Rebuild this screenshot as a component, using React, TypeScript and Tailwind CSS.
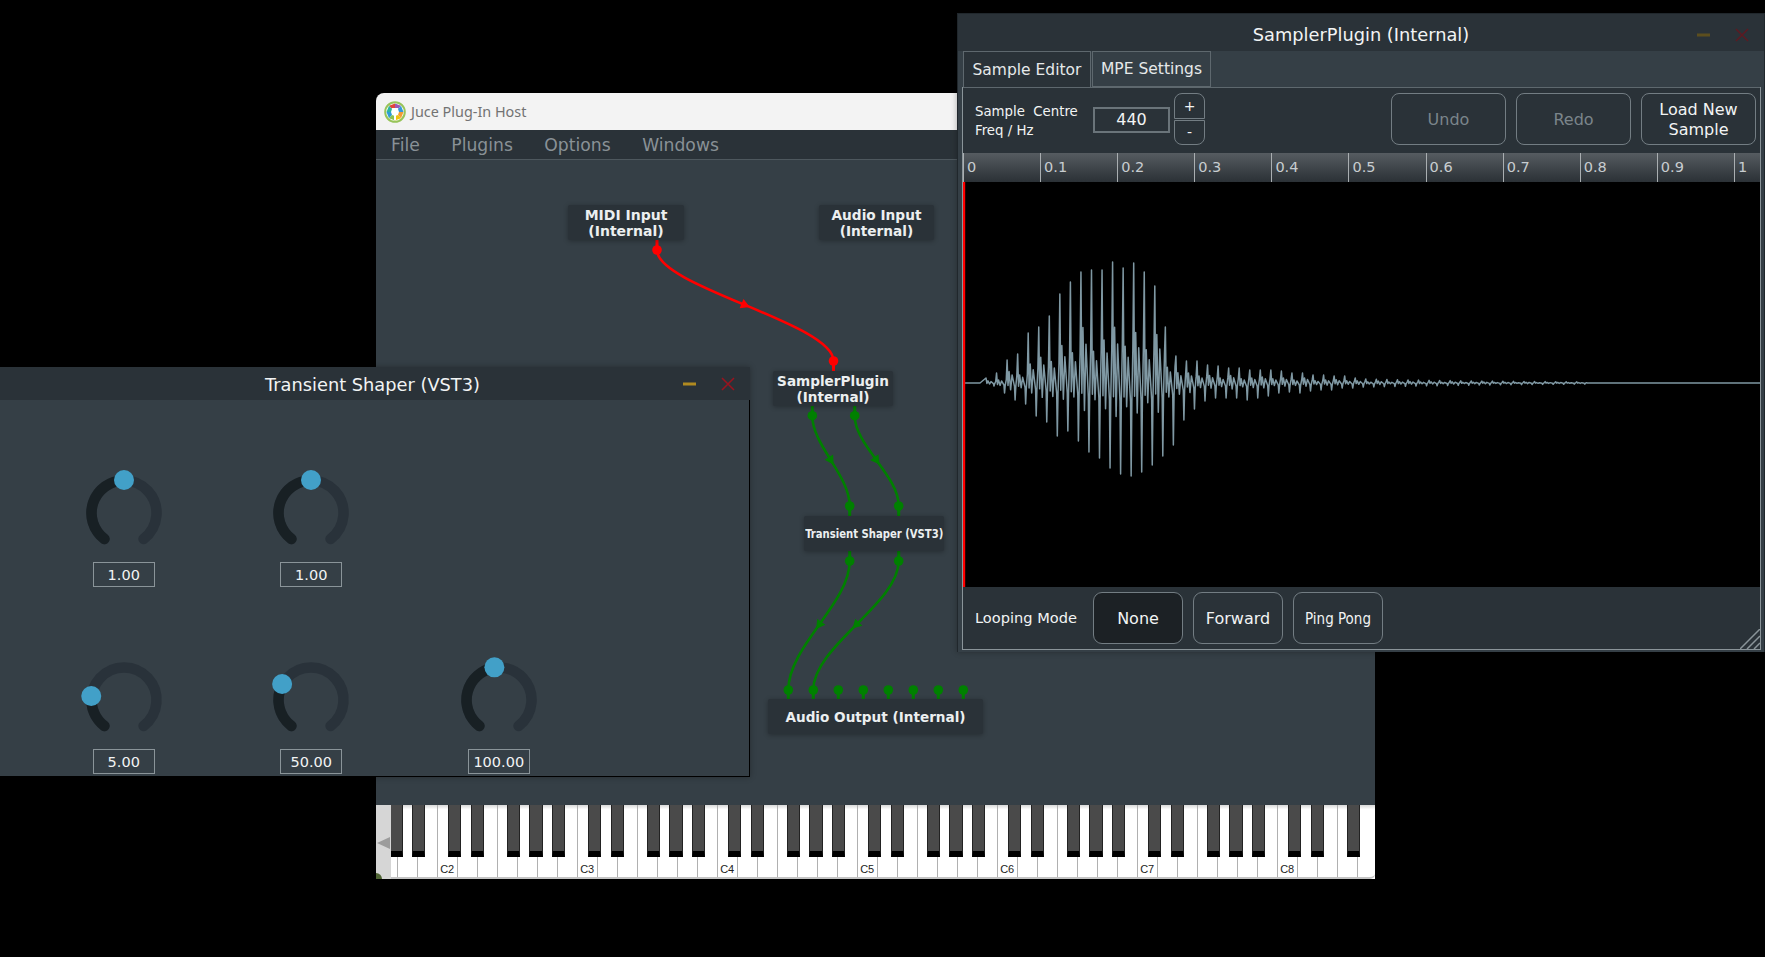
const FONT = "font-['DejaVu_Sans',sans-serif]";

// pin and wire coordinates are relative to the graph panel
const wires = [
  { x1: 281, y1: 90, x2: 457.5, y2: 201, color: "#ff0000" },
  { x1: 436.3, y1: 255.7, x2: 473.7, y2: 346, color: "#008000" },
  { x1: 478.7, y1: 255.7, x2: 522.7, y2: 346, color: "#008000" },
  { x1: 473.7, y1: 401, x2: 412.3, y2: 530, color: "#008000" },
  { x1: 522.7, y1: 401, x2: 437.3, y2: 530, color: "#008000" },
];

const pins = [
  { x: 281, y: 90, stem: 80, color: "#ff0000" },
  { x: 457.5, y: 201, stem: 211, color: "#ff0000" },
  { x: 436.3, y: 255.7, stem: 246, color: "#008000" },
  { x: 478.7, y: 255.7, stem: 246, color: "#008000" },
  { x: 473.7, y: 346, stem: 356, color: "#008000" },
  { x: 522.7, y: 346, stem: 356, color: "#008000" },
  { x: 473.7, y: 401, stem: 391, color: "#008000" },
  { x: 522.7, y: 401, stem: 391, color: "#008000" },
  ...[0, 1, 2, 3, 4, 5, 6, 7].map((i) => ({ x: 412.3 + 25 * i, y: 530, stem: 539, color: "#008000" })),
];

function Graph() {
  return (
    <svg className="absolute inset-0 h-full w-full" fill="none">
      {wires.map((w, i) => {
        const dy = w.y2 - w.y1;
        const c1y = w.y1 + dy * 0.33;
        const c2y = w.y1 + dy * 0.66;
        const mx = (w.x1 + w.x2) / 2;
        const my = 0.125 * w.y1 + 0.375 * c1y + 0.375 * c2y + 0.125 * w.y2;
        const tx = 0.75 * (w.x2 - w.x1);
        const ty = 0.75 * (c2y - c1y) + 0.75 * (w.y2 - w.y1 - (c2y - c1y)) / 2;
        const angle = (Math.atan2(ty, tx) * 180) / Math.PI;
        return (
          <g key={i}>
            <path
              d={`M${w.x1} ${w.y1}C${w.x1} ${c1y} ${w.x2} ${c2y} ${w.x2} ${w.y2}`}
              stroke={w.color}
              strokeWidth="2.6"
            />
            <path
              d="M-4 5L-4 -5L5 0Z"
              fill={w.color}
              transform={`translate(${mx} ${my}) rotate(${angle})`}
            />
          </g>
        );
      })}
      {pins.map((p, i) => (
        <g key={i}>
          <path d={`M${p.x} ${p.y}V${p.stem}`} stroke={p.color} strokeWidth="3" />
          <circle cx={p.x} cy={p.y} r="4.8" fill={p.color} />
        </g>
      ))}
    </svg>
  );
}

function Node({ className, children }: { className: string; children: React.ReactNode }) {
  return (
    <div
      className={`absolute flex items-center justify-center rounded-[2px] bg-[#2a3238] pt-[1px] text-center leading-[16px] font-bold whitespace-nowrap text-[#eceff0] shadow-[0_1px_5px_rgba(0,0,0,0.3)] ${className}`}
    >
      {children}
    </div>
  );
}

const whiteKeys = Array.from({ length: 49 }, (_, i) => i);
const blackOffsets = [11.3, 34.3, 70, 92.6, 115.3];

function Keyboard() {
  const blacks: number[] = [];
  for (let oct = -1; oct <= 6; oct++) {
    for (const off of blackOffsets) {
      const left = 60.7 + oct * 140 + off - 15;
      if (left > -3 && left < 971) blacks.push(left);
    }
  }
  const labelAt: Record<number, string> = { 2: "C2", 9: "C3", 16: "C4", 23: "C5", 30: "C6", 37: "C7", 44: "C8" };
  return (
    <div className="flex h-[74px] shrink-0 bg-white">
      <div className="relative flex w-[15px] shrink-0 items-center bg-[#d6d6d6]">
        <svg width="15" height="14" viewBox="0 0 15 14" className="mt-[1px]">
          <path d="M1 7L14 1V13Z" fill="#9c9c9c" />
        </svg>
        <div className="absolute bottom-0 left-0 h-[6px] w-[6px] rounded-tr-[6px] bg-[#4f6434]" />
      </div>
      <div className="relative flex-1 overflow-hidden rounded-br-[5px] border-b-2 border-[#c4c4c4] bg-gradient-to-b from-[#d8d8d8] from-0% to-white to-[6%]">
        <div className="flex h-full pl-[5.7px]">
          {whiteKeys.map((i) => (
            <div
              key={i}
              className="flex h-full w-5 shrink-0 items-end justify-center border-l border-[#b0b0b0] pb-[1px] font-['Liberation_Sans',sans-serif] text-[11px] leading-[14px] text-[#222]"
            >
              {labelAt[i]}
            </div>
          ))}
        </div>
        {blacks.map((left) => (
          <div
            key={left}
            className="absolute top-0 h-[52px] w-[13.3px] border-x border-b-[6px] border-[#000] border-x-[#222] bg-[#4a4a4a]"
            style={{ left }}
          />
        ))}
      </div>
    </div>
  );
}

function polar(cx: number, cy: number, r: number, deg: number) {
  const a = (deg * Math.PI) / 180;
  return { x: cx + r * Math.sin(a), y: cy - r * Math.cos(a) };
}

function arc(r: number, from: number, to: number) {
  const a = polar(40, 40, r, from);
  const b = polar(40, 40, r, to);
  const large = to - from > 180 ? 1 : 0;
  return `M${a.x} ${a.y}A${r} ${r} 0 ${large} 1 ${b.x} ${b.y}`;
}

function Knob({ angle, value }: { angle: number; value: string }) {
  const thumb = polar(40, 40, 33, angle);
  return (
    <div className="flex flex-col items-center">
      <svg width="80" height="80" viewBox="0 0 80 80" fill="none" className="overflow-visible">
        <path d={arc(32.5, -143, 143)} stroke="#29323a" strokeWidth="10.5" strokeLinecap="round" />
        <path d={arc(32.5, -143, angle)} stroke="#182024" strokeWidth="10.5" strokeLinecap="round" />
        <circle cx={thumb.x} cy={thumb.y} r="10" fill="#42a0c8" />
      </svg>
      <div className="mt-[9px] flex h-[25px] w-[62px] items-center justify-center border border-[#8a9499] pt-[2px] text-[14.5px] text-[#f2f4f4]">
        {value}
      </div>
    </div>
  );
}

function TitleBar({ title, className, iconTop, minus, close }: { title: string; className: string; iconTop: string; minus: string; close: string }) {
  return (
    <div className={`relative flex shrink-0 items-center justify-center bg-[#2a3238] text-[17.8px] text-[#f2f4f4] ${className}`}>
      {title}
      <div className={`absolute right-[54px] h-[3px] w-[13px] -translate-y-1/2 ${iconTop} ${minus}`} />
      <svg width="14" height="14" viewBox="0 0 14 14" className={`absolute right-[15px] -translate-y-1/2 ${iconTop}`}>
        <path d="M1 1L13 13M13 1L1 13" stroke={close} strokeWidth="1.6" />
      </svg>
    </div>
  );
}

function ShaperWindow() {
  return (
    <div className="absolute top-[367px] left-0 z-10 flex h-[410px] w-[750px] flex-col border-r border-b border-black bg-[#353f46] text-white shadow-[0_0_6px_rgba(0,0,0,0.3)]">
      <TitleBar title="Transient Shaper (VST3)" className="-mr-[1px] h-[33px] pt-[3px] pr-[5px]" iconTop="top-[17px]" minus="bg-[#b08a20]" close="#97141f" />
      <div className="grid grid-cols-[187.5px_187.5px_187.5px] gap-y-[73px] pt-[73px] pl-[30px]">
        <Knob angle={0} value="1.00" />
        <Knob angle={0} value="1.00" />
        <div />
        <Knob angle={-83} value="5.00" />
        <Knob angle={-61} value="50.00" />
        <Knob angle={-8} value="100.00" />
      </div>
    </div>
  );
}

const tops = [5, 10, 23, 29, 50, 56, 67, 89, 101, 111, 113, 113, 121, 115, 120, 111, 97, 56, 27, 22, 22, 18, 17, 15, 15, 13, 13, 13, 12, 10, 10, 8, 8, 7, 7, 5];
const bottoms = [3, 10, 17, 21, 33, 39, 53, 48, 58, 69, 75, 85, 91, 93, 89, 82, 73, 62, 37, 26, 18, 15, 15, 15, 17, 15, 13, 10, 9, 10, 8, 7, 7, 5, 5, 4];
// uneven inner lobes, so the burst doesn't look like a comb
const lobes = [0.42, 0.3, 0.5, 0.28, 0.38, 0.46, 0.32];

function Waveform() {
  // zero line sits at y=201, first swing at x=17
  const pts: string[] = ["2,201", "17,201"];
  const period = 10.55;
  let x = 23;
  let k = 0;
  while (x < 620) {
    const fade = Math.max(0.4, 4 * Math.pow(0.994, x - 400));
    const t = k < tops.length ? tops[k] : fade;
    const b = k < bottoms.length ? bottoms[k] : fade;
    const lobe = lobes[k % lobes.length];
    pts.push(`${x},${201 - t}`);
    pts.push(`${x + 0.9},${201 + b * 0.15}`);
    pts.push(`${x + 2},${201 - t * lobe}`);
    pts.push(`${x + 3.5},${201 + b * lobe * 0.8}`);
    pts.push(`${x + 5},${201 - t * lobe * 0.7}`);
    pts.push(`${x + 7.4},${201 + b * 0.2}`);
    pts.push(`${x + 8},${201 + b}`);
    pts.push(`${x + 8.7},${201 + b * 0.2}`);
    pts.push(`${x + 9.7},${201 - t * 0.3}`);
    x += period;
    k++;
  }
  pts.push(`${x},201`, "798,201");
  return (
    <svg className="h-full w-full" fill="none">
      <polyline points={pts.join(" ")} stroke="#7f98a3" strokeWidth="1.5" strokeLinejoin="round" />
      <path d="M1 0V405" stroke="#ff0000" strokeWidth="2.4" />
    </svg>
  );
}

const ticks = ["0", "0.1", "0.2", "0.3", "0.4", "0.5", "0.6", "0.7", "0.8", "0.9", "1"];

function ActionButton({ children, dim }: { children: React.ReactNode; dim?: boolean }) {
  return (
    <div
      className={`flex h-[52px] w-[115px] items-center justify-center rounded-[8px] border border-[#737d83] pt-[2px] text-center text-[16px] leading-[20px] ${dim ? "text-[#7b858b]" : "text-[#f2f4f4]"}`}
    >
      {children}
    </div>
  );
}

function ModeButton({ children, active, small }: { children: React.ReactNode; active?: boolean; small?: boolean }) {
  return (
    <div
      className={`flex h-[52px] w-[90px] items-center justify-center rounded-[9px] border border-[#737d83] pt-[2px] text-[#f2f4f4] ${small ? "text-[15px] font-stretch-condensed" : "text-[16px]"} ${active ? "bg-[#1c2125]" : ""}`}
    >
      {children}
    </div>
  );
}

function SamplerWindow() {
  return (
    <div className="absolute top-[13px] left-[957px] z-20 flex h-[639px] w-[808px] flex-col border border-b-0 border-[#20272c] bg-[#353f46] pr-[3px] pb-[2px] pl-[4px] text-white shadow-[0_0_6px_rgba(0,0,0,0.3)]">
      <TitleBar title="SamplerPlugin (Internal)" className="-mr-[3px] -ml-[4px] h-[37px] pt-[5px]" iconTop="top-[21px]" minus="bg-[#5c4e1e]" close="#5c1a22" />
      <div className="flex h-[36px] shrink-0 items-end gap-[1px] bg-[#353f46] pl-[1px] text-[15.5px]">
        <div className="flex h-[36px] w-[128px] items-center justify-center border border-b-0 border-[#5e686e] bg-[#2a3238] pt-[2px] text-[#e6e9ea]">
          Sample Editor
        </div>
        <div className="flex h-[36px] w-[119px] items-center justify-center border border-[#5e686e] bg-[#353f46] pt-[2px] text-[#e6e9ea]">
          MPE Settings
        </div>
      </div>
      <div className="flex flex-1 flex-col border-x border-b border-[#8a9499] bg-[#2a3238]">
        <div className="flex h-[66px] shrink-0 items-start border-t border-[#5e686e] pt-[5px] pr-[4px] pl-[12px]">
          <div className="mt-[9px] w-[118px] text-[13.3px] leading-[19px] whitespace-pre text-[#f2f4f4]">{"Sample  Centre\nFreq / Hz"}</div>
          <div className="mt-[14px] flex h-[26px] w-[77px] items-center justify-center border-2 border-[#6a747a] text-[16px] text-[#f2f4f4]">440</div>
          <div className="ml-[4px] flex w-[31px] flex-col gap-[1px] text-[14px] text-[#f2f4f4]">
            <div className="flex h-[26px] items-center justify-center rounded-t-[8px] border border-[#737d83]">+</div>
            <div className="flex h-[25px] items-center justify-center rounded-b-[8px] border border-[#737d83]">-</div>
          </div>
          <div className="ml-auto flex gap-[10px]">
            <ActionButton dim>Undo</ActionButton>
            <ActionButton dim>Redo</ActionButton>
            <ActionButton>
              Load New
              <br />
              Sample
            </ActionButton>
          </div>
        </div>
        <div className="flex h-[29px] shrink-0 bg-gradient-to-b from-[#565c61] to-[#2b3136] text-[14.5px] text-[#c8cdd0]">
          {ticks.map((t) => (
            <div key={t} className="flex w-[77.1px] shrink-0 items-center border-l border-[#a9aeb1] pl-[3px] last:w-auto">
              {t}
            </div>
          ))}
        </div>
        <div className="min-h-0 flex-1 bg-black">
          <Waveform />
        </div>
        <div className="relative flex h-[62px] shrink-0 items-center gap-[10px] pl-[12px]">
          <div className="mr-[8px] w-[100px] text-[14.6px] whitespace-nowrap text-[#f2f4f4]">Looping Mode</div>
          <ModeButton active>None</ModeButton>
          <ModeButton>Forward</ModeButton>
          <ModeButton small>Ping Pong</ModeButton>
          <svg width="20" height="20" viewBox="0 0 20 20" className="absolute right-0 bottom-0" fill="none">
            <path d="M0 20L20 0M7 20L20 7M14 20L20 14" stroke="#8a9499" strokeWidth="1.5" />
          </svg>
        </div>
      </div>
    </div>
  );
}

function JuceLogo() {
  return (
    <svg width="22" height="22" viewBox="0 0 22 22" fill="none">
      <circle cx="11" cy="11" r="9.8" fill="#fff" stroke="#97c459" strokeWidth="2" />
      <path d="M11 2.5L11 7L8 8L5 4.8Z" fill="#e0463c" />
      <path d="M11 2.5L11 7L14 8L17 4.8Z" fill="#9b59b6" />
      <path d="M17 4.8L14 8L15 11L19.5 11Z" fill="#3498db" />
      <path d="M2.5 11L7 11L8 8L5 4.8Z" fill="#2bb5a0" />
      <path d="M2.5 11L7 11L8 14L5 17.2Z" fill="#2e9bd6" />
      <path d="M19.5 11L15 11L14 14L17 17.2Z" fill="#f39c34" />
      <path d="M5 17.2L8 14L11 15L11 19.5Z" fill="#8cc152" />
      <path d="M17 17.2L14 14L11 15L11 19.5Z" fill="#f1c40f" />
      <path d="M8 7H14V12L12 14V19H10V14L8 12Z" fill="#fff" />
    </svg>
  );
}

function HostWindow() {
  return (
    <div className="absolute top-[93px] left-[376px] flex h-[786px] w-[999px] flex-col overflow-hidden rounded-t-[8px]">
      <div className="flex h-[37px] shrink-0 items-center gap-[5px] bg-[#f3f3f3] pl-[8px] font-['Noto_Sans',sans-serif] text-[14.4px] text-[#727272]">
        <JuceLogo />
        Juce Plug-In Host
      </div>
      <div className="flex h-[30px] shrink-0 items-center gap-[31.5px] border-b border-[#4e585e] bg-[#2a3238] pt-[3px] pl-[15px] text-[17.2px] text-[#899196]">
        <span>File</span>
        <span>Plugins</span>
        <span>Options</span>
        <span>Windows</span>
      </div>
      <div className="relative min-h-0 flex-1 bg-[#353f46]">
        <Graph />
        <Node className="top-[45px] left-[192px] h-[35px] w-[116px] text-[14px]">
          MIDI Input
          <br />
          (Internal)
        </Node>
        <Node className="top-[45px] left-[443px] h-[35px] w-[115px] text-[13.7px]">
          Audio Input
          <br />
          (Internal)
        </Node>
        <Node className="top-[211px] left-[397px] h-[35px] w-[120px] text-[13.6px]">
          SamplerPlugin
          <br />
          (Internal)
        </Node>
        <Node className="top-[356px] left-[428px] h-[35px] w-[140px] text-[13px] font-stretch-condensed">
          <span className="inline-block scale-x-[0.86]">Transient Shaper (VST3)</span>
        </Node>
        <Node className="top-[539px] left-[392px] h-[35px] w-[215px] text-[13.6px]">Audio Output (Internal)</Node>
      </div>
      <Keyboard />
    </div>
  );
}

export default function App() {
  return (
    <div className={`relative h-[957px] w-[1765px] overflow-hidden bg-black ${FONT}`}>
      <HostWindow />
      <ShaperWindow />
      <SamplerWindow />
    </div>
  );
}
